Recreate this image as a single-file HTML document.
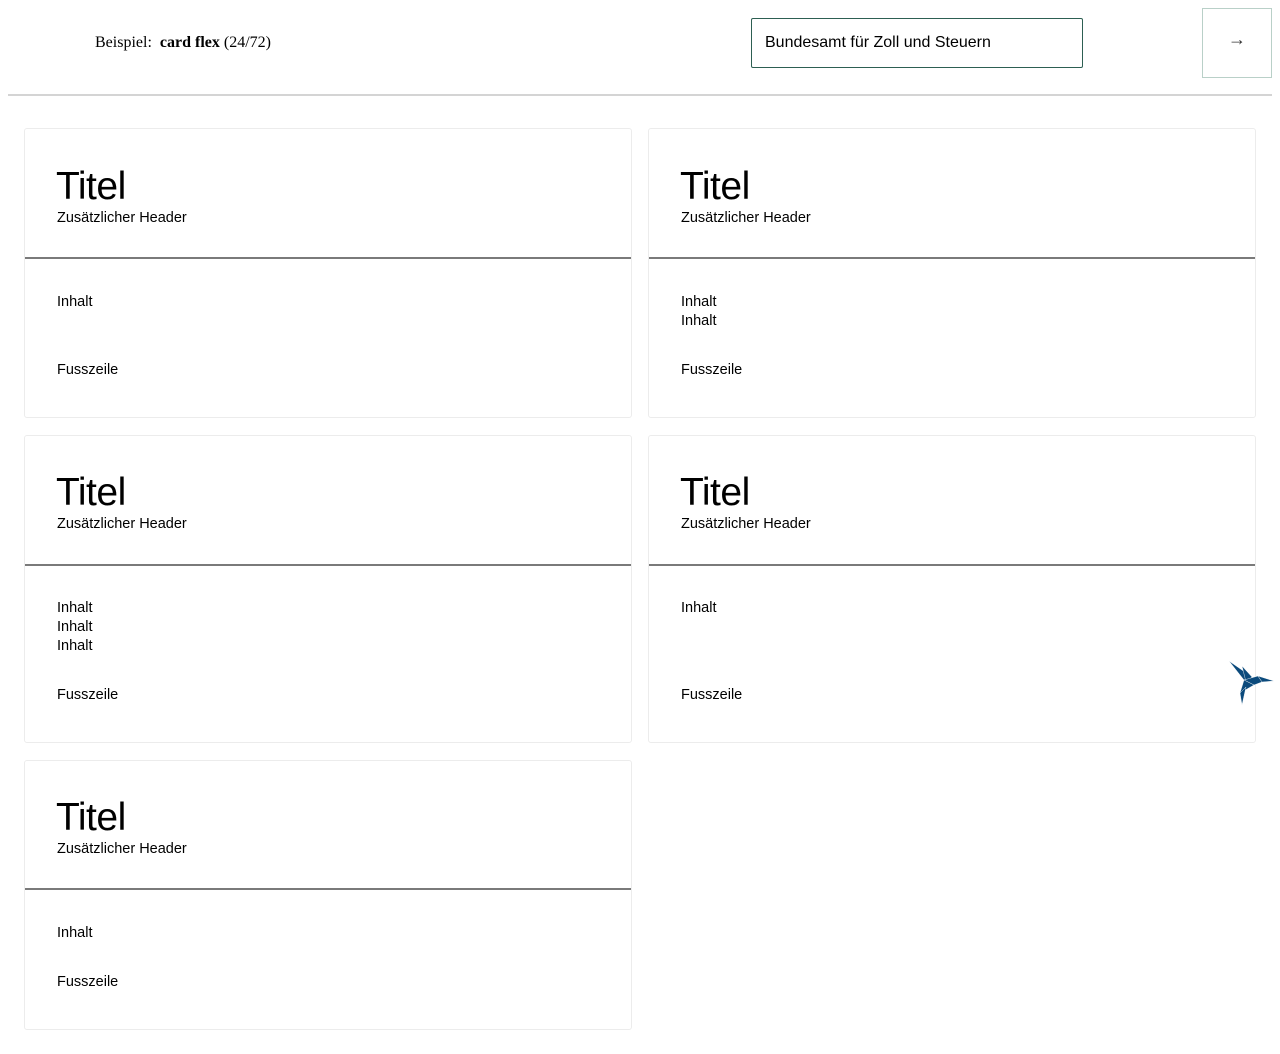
<!DOCTYPE html>
<html><head><meta charset="utf-8"><style>
*{margin:0;padding:0;box-sizing:border-box}
body{width:1280px;height:1054px;background:#fff;position:relative;font-family:"Liberation Sans",sans-serif;color:#000;overflow:hidden}
.t{position:absolute;white-space:nowrap;line-height:1}
.card{position:absolute;width:608px;border:1px solid #ececec;border-radius:3px;background:#fff}
.hr{position:absolute;left:0;right:0;height:2px;background:#7a7a7a}
.ti{font-size:39px;letter-spacing:-0.5px}
.s{font-size:14.5px}
</style></head><body>
<div class="t" style="left:95px;top:35px;font-family:'Liberation Serif',serif;font-size:16px">Beispiel:&nbsp; <b>card flex</b> (24/72)</div>
<div style="position:absolute;left:751px;top:18px;width:332px;height:50px;border:1px solid #2d5f52;border-radius:2px"></div>
<div class="t s" style="left:765px;top:35px;font-size:16px">Bundesamt für Zoll und Steuern</div>
<div style="position:absolute;left:1202px;top:8px;width:70px;height:70px;border:1px solid #b9d0c8"></div>
<div class="t" style="left:1228px;top:30px;font-size:18px;font-weight:300;color:#333">→</div>
<div style="position:absolute;left:8px;top:94px;width:1264px;height:2px;background:#d4d4d4"></div>

<div class="card" style="left:24px;top:128px;height:290px"><div class="hr" style="top:128px"></div></div>
<div class="card" style="left:648px;top:128px;height:290px"><div class="hr" style="top:128px"></div></div>
<div class="card" style="left:24px;top:435px;height:308px"><div class="hr" style="top:128px"></div></div>
<div class="card" style="left:648px;top:435px;height:308px"><div class="hr" style="top:128px"></div></div>
<div class="card" style="left:24px;top:760px;height:270px"><div class="hr" style="top:127px"></div></div>

<div class="t ti" style="left:56px;top:167px">Titel</div><div class="t s" style="left:57px;top:211px">Zusätzlicher Header</div>
<div class="t s" style="left:57px;top:295px">Inhalt</div><div class="t s" style="left:57px;top:363px">Fusszeile</div>

<div class="t ti" style="left:680px;top:167px">Titel</div><div class="t s" style="left:681px;top:211px">Zusätzlicher Header</div>
<div class="t s" style="left:681px;top:295px">Inhalt</div><div class="t s" style="left:681px;top:314px">Inhalt</div><div class="t s" style="left:681px;top:363px">Fusszeile</div>

<div class="t ti" style="left:56px;top:473px">Titel</div><div class="t s" style="left:57px;top:517px">Zusätzlicher Header</div>
<div class="t s" style="left:57px;top:601px">Inhalt</div><div class="t s" style="left:57px;top:620px">Inhalt</div><div class="t s" style="left:57px;top:639px">Inhalt</div><div class="t s" style="left:57px;top:688px">Fusszeile</div>

<div class="t ti" style="left:680px;top:473px">Titel</div><div class="t s" style="left:681px;top:517px">Zusätzlicher Header</div>
<div class="t s" style="left:681px;top:601px">Inhalt</div><div class="t s" style="left:681px;top:688px">Fusszeile</div>

<div class="t ti" style="left:56px;top:798px">Titel</div><div class="t s" style="left:57px;top:842px">Zusätzlicher Header</div>
<div class="t s" style="left:57px;top:926px">Inhalt</div><div class="t s" style="left:57px;top:975px">Fusszeile</div>

<svg style="position:absolute;left:1226px;top:658px" width="50" height="50" viewBox="0 0 50 50">
<g fill="#0b4a7c" stroke="#fff" stroke-width="0.4">
<polygon points="3,3 18,22 26,19"/>
<polygon points="16,8 26,19 20,24"/>
<polygon points="18,22 32,18 36,24 28,27"/>
<polygon points="32,18 48,23 36,24"/>
<polygon points="18,22 28,27 14,35"/>
<polygon points="14,35 20,29 16,47"/>
</g></svg>
</body></html>
